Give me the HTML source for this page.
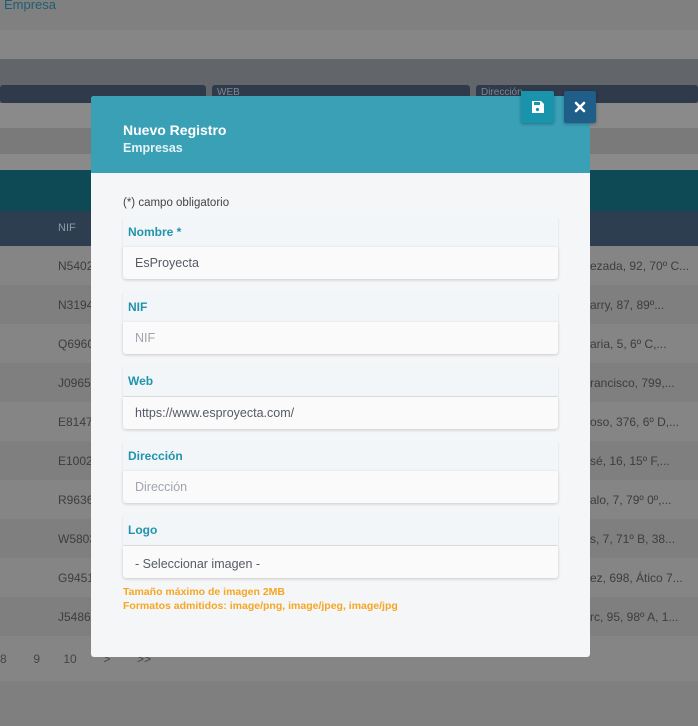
<!DOCTYPE html>
<html><head><meta charset="utf-8"><style>
*{margin:0;padding:0;box-sizing:border-box}
body{width:698px;height:726px;overflow:hidden;position:relative;background:#7f7f7f;font-family:"Liberation Sans",sans-serif}
.a{position:absolute}
.bgt{color:#3d3d3d;font-size:12px}
.m{left:91px;top:96px;width:499px;height:561px;background:#f5f6f8;border-radius:3px;overflow:hidden}
.mh{left:0;top:0;width:499px;height:77px;background:#3aa0b6}
.lab{left:32px;width:435px;height:30px;background:#f2f6f9;color:#2094ac;font-size:12px;font-weight:bold;padding:8px 5px;box-shadow:0 1px 2px rgba(0,0,0,.12)}
.inp{left:32px;width:435px;height:32px;background:#fafafa;font-size:12.5px;color:#555a66;padding:9px 12px;box-shadow:0 1px 3px rgba(0,0,0,.18);border-radius:0 0 3px 3px}
.ph{color:#a0a4ae}
</style></head><body>
<div class="a" style="left:0;top:0;width:698px;height:30px;background:#808080"></div>
<div class="a" style="left:4px;top:-3px;color:#1d5e73;font-size:13px">Empresa</div>
<div class="a" style="left:0;top:30px;width:698px;height:29px;background:#868686"></div>
<div class="a" style="left:0;top:59px;width:698px;height:26px;background:#62666b"></div>
<div class="a" style="left:0;top:85px;width:698px;height:18px;background:#62666b"></div>
<div class="a" style="left:0;top:85px;width:206px;height:18px;background:#2f3a4a;border-radius:3px"></div>
<div class="a" style="left:212px;top:85px;width:258px;height:18px;background:#2f3a4a;border-radius:3px;color:#7d8592;font-size:10px;padding:2px 5px">WEB</div>
<div class="a" style="left:476px;top:85px;width:222px;height:18px;background:#2f3a4a;border-radius:3px;color:#7d8592;font-size:10px;padding:2px 5px">Dirección</div>
<div class="a" style="left:0;top:103px;width:698px;height:25px;background:#8a8a8a"></div>
<div class="a" style="left:0;top:128px;width:698px;height:26px;background:#7a7a7a"></div>
<div class="a" style="left:0;top:154px;width:698px;height:16px;background:#8a8a8a"></div>
<div class="a" style="left:0;top:170px;width:698px;height:41px;background:#0e4a56"></div>
<div class="a" style="left:0;top:211px;width:698px;height:35px;background:#2c3e50"></div>
<div class="a" style="left:58px;top:222px;color:#8e99a6;font-size:11px">NIF</div>
<div class="a" style="left:0;top:246px;width:698px;height:39px;background:#858585"></div>
<div class="a" style="left:0;top:285px;width:698px;height:39px;background:#7f7f7f"></div>
<div class="a" style="left:0;top:324px;width:698px;height:39px;background:#858585"></div>
<div class="a" style="left:0;top:363px;width:698px;height:39px;background:#7f7f7f"></div>
<div class="a" style="left:0;top:402px;width:698px;height:39px;background:#858585"></div>
<div class="a" style="left:0;top:441px;width:698px;height:39px;background:#7f7f7f"></div>
<div class="a" style="left:0;top:480px;width:698px;height:39px;background:#858585"></div>
<div class="a" style="left:0;top:519px;width:698px;height:39px;background:#7f7f7f"></div>
<div class="a" style="left:0;top:558px;width:698px;height:39px;background:#858585"></div>
<div class="a" style="left:0;top:597px;width:698px;height:39px;background:#7f7f7f"></div>
<div class="a" style="left:0;top:636px;width:698px;height:45px;background:#858585"></div>
<div class="a bgt" style="left:58px;top:259px">N5402</div><div class="a bgt" style="left:590px;top:259px">ezada, 92, 70º C...</div>
<div class="a bgt" style="left:58px;top:298px">N3194</div><div class="a bgt" style="left:590px;top:298px">arry, 87, 89º...</div>
<div class="a bgt" style="left:58px;top:337px">Q6960</div><div class="a bgt" style="left:590px;top:337px">aria, 5, 6º C,...</div>
<div class="a bgt" style="left:58px;top:376px">J0965</div><div class="a bgt" style="left:590px;top:376px">rancisco, 799,...</div>
<div class="a bgt" style="left:58px;top:415px">E8147</div><div class="a bgt" style="left:590px;top:415px">oso, 376, 6º D,...</div>
<div class="a bgt" style="left:58px;top:454px">E1002</div><div class="a bgt" style="left:590px;top:454px">sé, 16, 15º F,...</div>
<div class="a bgt" style="left:58px;top:493px">R9636</div><div class="a bgt" style="left:590px;top:493px">alo, 7, 79º 0º,...</div>
<div class="a bgt" style="left:58px;top:532px">W5803</div><div class="a bgt" style="left:590px;top:532px">s, 7, 71º B, 38...</div>
<div class="a bgt" style="left:58px;top:571px">G9451</div><div class="a bgt" style="left:590px;top:571px">ez, 698, Ático 7...</div>
<div class="a bgt" style="left:58px;top:610px">J5486</div><div class="a bgt" style="left:590px;top:610px">rc, 95, 98º A, 1...</div>
<div class="a bgt" style="left:0;top:652px;color:#444">8&nbsp;&nbsp;&nbsp;&nbsp;&nbsp;&nbsp;&nbsp;&nbsp;9&nbsp;&nbsp;&nbsp;&nbsp;&nbsp;&nbsp;&nbsp;10&nbsp;&nbsp;&nbsp;&nbsp;&nbsp;&nbsp;&nbsp;&nbsp;&gt;&nbsp;&nbsp;&nbsp;&nbsp;&nbsp;&nbsp;&nbsp;&nbsp;&gt;&gt;</div>

<div class="a m">
 <div class="a mh"></div>
 <div class="a" style="left:32px;top:26px;color:#fff;font-size:14px;font-weight:bold">Nuevo Registro</div>
 <div class="a" style="left:32px;top:45px;color:#e4f3f6;font-size:12.5px;font-weight:bold">Empresas</div>
 <div class="a" style="left:32px;top:101px;color:#444;font-size:11.5px">(*) campo obligatorio</div>
 <div class="a lab" style="top:121px">Nombre *</div><div class="a inp" style="top:151px">EsProyecta</div>
 <div class="a lab" style="top:196px">NIF</div><div class="a inp ph" style="top:226px">NIF</div>
 <div class="a lab" style="top:270px">Web</div><div class="a inp" style="top:301px">https://www.esproyecta.com/</div>
 <div class="a lab" style="top:345px">Dirección</div><div class="a inp ph" style="top:375px">Dirección</div>
 <div class="a lab" style="top:419px">Logo</div><div class="a inp" style="top:450px;padding-top:11px">- Seleccionar imagen -</div>
 <div class="a" style="left:32px;top:489px;color:#f5a623;font-size:10.5px;font-weight:bold;line-height:14px">Tamaño máximo de imagen 2MB<br>Formatos admitidos: image/png, image/jpeg, image/jpg</div>
</div>
<div class="a" style="left:521px;top:91px;width:33px;height:32px;background:#1a94ad;border-radius:2px;box-shadow:0 1px 3px rgba(0,0,0,.3)">
 <svg width="33" height="32"><path d="M11 10h9l3 3v9h-12z" fill="#fff"/><rect x="13" y="11" width="6" height="3" fill="#1a94ad"/><circle cx="16.5" cy="18.5" r="1.6" fill="#1a94ad"/></svg>
</div>
<div class="a" style="left:564px;top:91px;width:32px;height:32px;background:#205e8a;border-radius:2px;box-shadow:0 1px 3px rgba(0,0,0,.3)">
 <svg width="32" height="32"><path d="M12 12l8 8M20 12l-8 8" stroke="#fff" stroke-width="2.6" stroke-linecap="round"/></svg>
</div>
</body></html>
